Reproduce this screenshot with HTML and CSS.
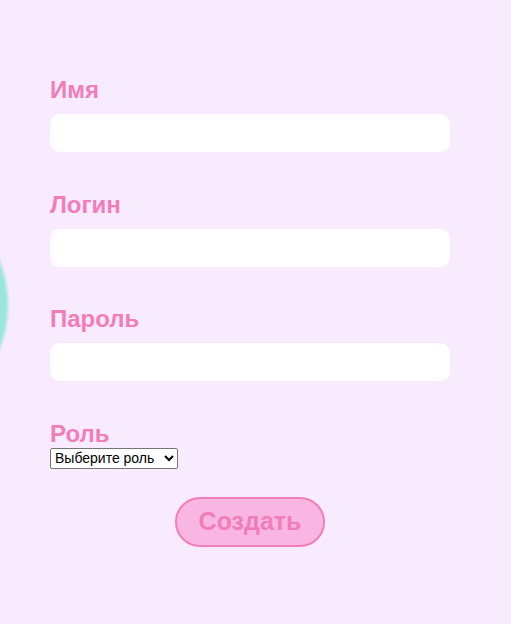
FILE: index.html
```html
<!DOCTYPE html>
<html lang="ru">
<head>
<meta charset="utf-8">
<title>Создать пользователя</title>
<link rel="stylesheet" href="styles.css">
</head>
<body>
<div class="blob"></div>
<form class="form">
  <div class="field">
    <label class="label" for="name">Имя</label>
    <input class="input" id="name" type="text">
  </div>
  <div class="field">
    <label class="label" for="login">Логин</label>
    <input class="input" id="login" type="text">
  </div>
  <div class="field">
    <label class="label" for="pass">Пароль</label>
    <input class="input" id="pass" type="password">
  </div>
  <div class="field field-role">
    <label class="label" for="role">Роль</label>
    <select class="select" id="role">
      <option>Выберите роль</option>
    </select>
  </div>
  <div class="actions">
    <button class="btn" type="button">Создать</button>
  </div>
</form>
</body>
</html>
```

FILE: styles.css
```css
html, body {
  margin: 0;
  padding: 0;
  height: 100%;
}
body {
  background: #f9ebfe;
  overflow: hidden;
  position: relative;
  font-family: "Liberation Sans", Arial, sans-serif;
}
.blob {
  position: absolute;
  left: -232px;
  top: 185px;
  width: 240px;
  height: 240px;
  border-radius: 50%;
  background: #98e6dc;
  filter: blur(1.5px);
}
.form {
  position: relative;
  width: 400px;
  margin: 0 0 0 50px;
  padding-top: 76px;
  display: flex;
  flex-direction: column;
}
.field {
  display: flex;
  flex-direction: column;
  align-items: flex-start;
  margin-bottom: 38.5px;
}
.field-role {
  margin-bottom: 28px;
}
.label {
  font-size: 24px;
  font-weight: 700;
  color: #f17db9;
  line-height: normal;
}
.input {
  box-sizing: border-box;
  width: 400px;
  height: 38px;
  margin: 10px 0 0 0;
  border: none;
  border-radius: 10px;
  background: #ffffff;
  outline: none;
  padding: 0 12px;
}
.select {
  box-sizing: border-box;
  width: 128px;
  height: 21px;
  margin: 0;
  font-family: "Liberation Sans", Arial, sans-serif;
  font-size: 14px;
}
.actions {
  display: flex;
  justify-content: center;
}
.btn {
  box-sizing: border-box;
  width: 150px;
  height: 50px;
  border: 2px solid #f17db9;
  border-radius: 25px;
  background: #f9b6e2;
  color: #f17db9;
  font-family: "Liberation Sans", Arial, sans-serif;
  font-size: 25px;
  font-weight: 700;
  padding: 0;
}
```
